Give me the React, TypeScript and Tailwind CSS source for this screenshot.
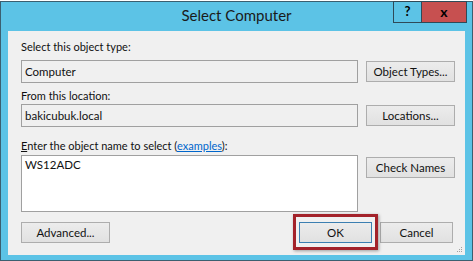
import React from 'react';

const font = "font-['Lato','Liberation_Sans',Arial,sans-serif]";

function WinButton({ label, className = '' }: { label: React.ReactNode; className?: string }) {
  return (
    <button
      className={`h-[21px] border border-[#adadad] bg-gradient-to-b from-[#ececec] to-[#e1e1e1] text-[11.5px] leading-[19px] text-[#111] ${className}`}
    >
      {label}
    </button>
  );
}

export default function App() {
  return (
    <div className={`relative h-[261px] w-[473px] overflow-hidden bg-white ${font}`}>
      <div className="mt-[1px] flex h-[260px] flex-col border border-[#3b5f70] bg-[#5cc3e6]">
        {/* title bar */}
        <div className="relative h-[29px] shrink-0">
          <div className="pt-[3px] text-center text-[15px] leading-[20px] text-[#1a1a1a]">
            Select Computer
          </div>
          <div className="absolute right-[5px] top-[-1px] flex h-[22px]">
            <div className="flex w-[29px] items-center justify-center border border-[#2f4a58] text-[13px] font-bold text-black">
              ?
            </div>
            <div className="-ml-px flex w-[46px] items-center justify-center border border-[#2f4a58] bg-[#c75050] text-[14px] font-bold leading-none text-black">
              x
            </div>
          </div>
        </div>

        {/* content panel */}
        <div className="relative mx-[7px] mb-[5px] flex-1 bg-[#f0f0f0] pl-[13px] pt-[9px] text-[11px] text-[#111]">
          <div className="leading-[14px]">Select this object type:</div>
          <div className="mt-[6px] flex items-center gap-[8px]">
            <div className="h-[23px] w-[337px] border border-[#a0a0a0] bg-[#f0f0f0] px-[3px] text-[11.5px] leading-[21px]">
              Computer
            </div>
            <WinButton label="Object Types..." className="w-[89px]" />
          </div>

          <div className="mt-[6px] leading-[14px]">From this location:</div>
          <div className="mt-[1px] flex items-center gap-[8px]">
            <div className="h-[23px] w-[337px] border border-[#a0a0a0] bg-[#f0f0f0] px-[3px] text-[11.5px] leading-[21px]">
              bakicubuk.local
            </div>
            <WinButton label="Locations..." className="w-[89px]" />
          </div>

          <div className="mt-[12px] leading-[14px]">
            <span className="underline">E</span>nter the object name to select (
            <span className="text-[#0066cc] underline">examples</span>):
          </div>
          <div className="mt-[2px] flex items-start gap-[8px]">
            <div className="h-[57px] w-[337px] border border-[#a0a0a0] bg-white px-[3px] pt-[2px] text-[11.5px] leading-[14px]">
              WS12ADC
            </div>
            <WinButton label="Check Names" className="mt-[2px] w-[89px]" />
          </div>

          <div className="mt-[10px] flex items-center">
            <WinButton label="Advanced..." className="w-[89px]" />
            <div className="relative ml-[189px]">
              <WinButton label="OK" className="w-[73px] !border-[#3c7fb1]" />
              <div className="pointer-events-none absolute -bottom-[7px] -left-[6px] -right-[6px] -top-[8px] border-[3px] border-[#a3222a] shadow-[1px_1px_3px_rgba(0,0,0,0.35)]" />
            </div>
            <WinButton label="Cancel" className="ml-[8px] w-[73px]" />
          </div>

          {/* resize grip */}
          <div className="absolute bottom-[3px] right-[3px] grid grid-cols-3 gap-[1px]">
            {[0, 0, 1, 0, 1, 1, 1, 1, 1].map((v, i) => (
              <span key={i} className={`h-[1px] w-[1px] ${v ? 'bg-[#a0a0a0]' : ''}`} />
            ))}
          </div>
        </div>
      </div>
    </div>
  );
}
